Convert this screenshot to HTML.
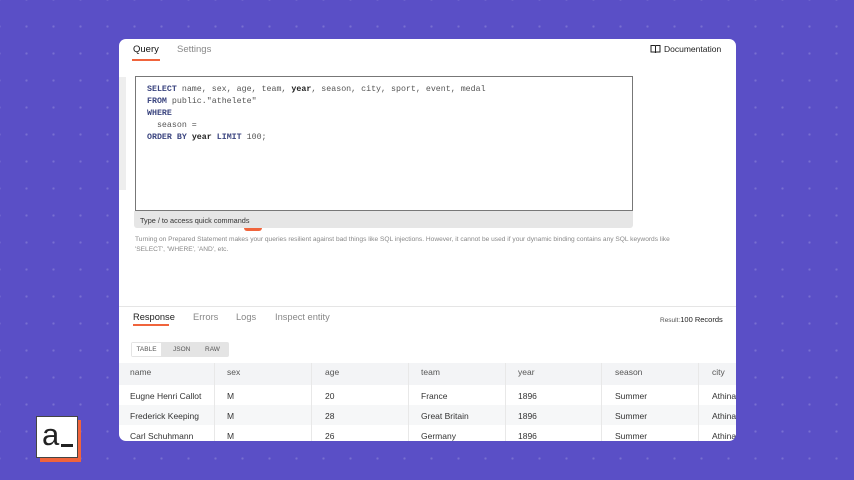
<!DOCTYPE html>
<html><head><meta charset="utf-8"><style>
*{margin:0;padding:0;box-sizing:border-box}
body{width:854px;height:480px;overflow:hidden;position:relative;background:#5a4fc6;
background-image:radial-gradient(circle,rgba(255,255,255,.18) 1px,transparent 1.3px);background-size:27px 27px;background-position:13px 13px;
font-family:"Liberation Sans",sans-serif}
.panel{position:absolute;left:119px;top:39px;width:617px;height:402px;background:#fff;border-radius:7px;overflow:hidden}
.abs{position:absolute}
.mono{font-family:"Liberation Mono",monospace;font-size:8.3px;color:#555}
.kw{color:#3c4680;font-weight:bold}
.b{color:#222;font-weight:bold}
.tbl .c{position:absolute;font-size:8.5px;color:#333}
</style></head><body>
<div class="panel">
 <div class="abs" style="left:14px;top:5px;font-size:9.5px;color:#111">Query</div>
 <div class="abs" style="left:13px;top:20px;width:28px;height:2px;background:#f0643c"></div>
 <div class="abs" style="left:58px;top:5px;font-size:9.5px;color:#888">Settings</div>
 <div class="abs" style="left:531px;top:5px;font-size:8.5px;color:#222;display:flex;align-items:center;gap:3px">
  <svg width="11" height="10" viewBox="0 0 11 10"><path d="M1 1.5h3.5c.6 0 1 .4 1 1V9c0-.5-.4-1-1-1H1zM10 1.5H6.5c-.6 0-1 .4-1 1V9c0-.5.4-1 1-1H10z" fill="none" stroke="#222" stroke-width="1"/></svg>Documentation</div>
 <div class="abs" style="left:0;top:38px;width:7px;height:113px;background:#eee"></div>
 <div class="abs" style="left:16px;top:37px;width:498px;height:135px;border:1px solid #777;background:#fff"></div>
 <div class="abs mono" style="left:28px;top:45px;line-height:12px">
  <div><span class="kw">SELECT</span> name, sex, age, team, <span class="b">year</span>, season, city, sport, event, medal</div>
  <div><span class="kw">FROM</span> public."athelete"</div>
  <div><span class="kw">WHERE</span></div>
  <div>&nbsp;&nbsp;season =</div>
  <div><span class="kw">ORDER BY</span> <span class="b">year</span> <span class="kw">LIMIT</span> 100;</div>
 </div>
 <div class="abs" style="left:15px;top:172px;width:499px;height:17px;background:#e6e6e6;border-radius:0 0 3px 3px;font-size:7.3px;color:#333;padding:5px 6px">Type / to access quick commands</div>
 <div class="abs" style="left:125px;top:189px;width:18px;height:3px;background:#f0643c;border-radius:0 0 4px 4px"></div>
 <div class="abs" style="left:16px;top:196px;width:560px;font-size:6.6px;color:#888;line-height:10px">Turning on Prepared Statement makes your queries resilient against bad things like SQL injections. However, it cannot be used if your dynamic binding contains any SQL keywords like<br>'SELECT', 'WHERE', 'AND', etc.</div>
 <div class="abs" style="left:0;top:267px;width:617px;height:1px;background:#e5e5e5"></div>
 <div class="abs" style="left:14px;top:273px;font-size:9.3px;color:#222">Response</div>
 <div class="abs" style="left:14px;top:285px;width:36px;height:2px;background:#f0643c"></div>
 <div class="abs" style="left:74px;top:273px;font-size:9.3px;color:#888">Errors</div>
 <div class="abs" style="left:117px;top:273px;font-size:9.3px;color:#888">Logs</div>
 <div class="abs" style="left:156px;top:273px;font-size:9.3px;color:#888">Inspect entity</div>
 <div class="abs" style="left:541px;top:276px;font-size:7.5px;color:#222"><span style="font-size:6.5px;color:#555">Result:</span>100 Records</div>
 <div class="abs" style="left:12px;top:303px;width:98px;height:15px;background:#e4e4e4;border-radius:2px;font-size:6.5px;color:#555">
  <div class="abs" style="left:1px;top:1px;width:29px;height:13px;background:#fff;text-align:center;line-height:13px">TABLE</div>
  <div class="abs" style="left:42px;top:0;line-height:15px">JSON</div>
  <div class="abs" style="left:74px;top:0;line-height:15px">RAW</div>
 </div>
 <div class="tbl">
  <div class="abs" style="left:0;top:324px;width:617px;height:22px;background:#f3f4f6"></div>
  <div class="abs" style="left:0;top:366px;width:617px;height:20px;background:#f6f7f8"></div>
  <div class="abs" style="left:95px;top:324px;width:1px;height:80px;background:#e8e8e8"></div>
  <div class="abs" style="left:192px;top:324px;width:1px;height:80px;background:#e8e8e8"></div>
  <div class="abs" style="left:289px;top:324px;width:1px;height:80px;background:#e8e8e8"></div>
  <div class="abs" style="left:386px;top:324px;width:1px;height:80px;background:#e8e8e8"></div>
  <div class="abs" style="left:482px;top:324px;width:1px;height:80px;background:#e8e8e8"></div>
  <div class="abs" style="left:579px;top:324px;width:1px;height:80px;background:#e8e8e8"></div>
  <div class="c" style="left:11px;top:328px;color:#555">name</div><div class="c" style="left:108px;top:328px;color:#555">sex</div><div class="c" style="left:206px;top:328px;color:#555">age</div><div class="c" style="left:302px;top:328px;color:#555">team</div><div class="c" style="left:399px;top:328px;color:#555">year</div><div class="c" style="left:496px;top:328px;color:#555">season</div><div class="c" style="left:593px;top:328px;color:#555">city</div>
  <div class="c" style="left:11px;top:352px">Eugne Henri Callot</div><div class="c" style="left:108px;top:352px">M</div><div class="c" style="left:206px;top:352px">20</div><div class="c" style="left:302px;top:352px">France</div><div class="c" style="left:399px;top:352px">1896</div><div class="c" style="left:496px;top:352px">Summer</div><div class="c" style="left:593px;top:352px">Athina</div>
  <div class="c" style="left:11px;top:372px">Frederick Keeping</div><div class="c" style="left:108px;top:372px">M</div><div class="c" style="left:206px;top:372px">28</div><div class="c" style="left:302px;top:372px">Great Britain</div><div class="c" style="left:399px;top:372px">1896</div><div class="c" style="left:496px;top:372px">Summer</div><div class="c" style="left:593px;top:372px">Athina</div>
  <div class="c" style="left:11px;top:392px">Carl Schuhmann</div><div class="c" style="left:108px;top:392px">M</div><div class="c" style="left:206px;top:392px">26</div><div class="c" style="left:302px;top:392px">Germany</div><div class="c" style="left:399px;top:392px">1896</div><div class="c" style="left:496px;top:392px">Summer</div><div class="c" style="left:593px;top:392px">Athina</div>
 </div>
</div>
<div class="abs" style="left:40px;top:420px;width:41px;height:42px;background:#f0643c"></div>
<div class="abs" style="left:36px;top:416px;width:42px;height:42px;background:#fff;border:1px solid #444;font-size:31px;color:#222;line-height:36px;padding-left:5px;font-family:'Liberation Sans',sans-serif">a<span style="display:inline-block;width:12px;height:3px;background:#222;vertical-align:-2px;margin-left:2px"></span></div>
</body></html>
